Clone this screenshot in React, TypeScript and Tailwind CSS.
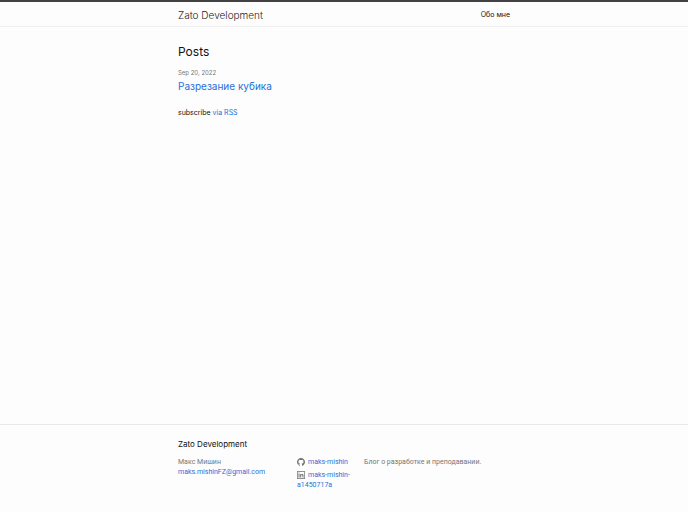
import React from "react";

const link = "text-[#2a6fd8] hover:underline";

function GithubIcon() {
  return (
    <svg viewBox="0 0 16 16" className="mr-[3px] inline-block size-2 align-text-top" fill="#707070" aria-hidden="true">
      <path d="M8 0C3.58 0 0 3.582 0 8c0 3.535 2.292 6.533 5.471 7.591.4.074.547-.174.547-.385 0-.191-.008-.821-.011-1.489-2.226.484-2.695-.944-2.695-.944-.364-.925-.888-1.171-.888-1.171-.726-.497.055-.486.055-.486.803.056 1.226.824 1.226.824.714 1.223 1.872.869 2.328.665.072-.517.279-.87.508-1.07-1.777-.202-3.645-.888-3.645-3.954 0-.873.313-1.587.824-2.147-.083-.202-.357-1.015.077-2.117 0 0 .672-.215 2.201.82A7.67 7.67 0 0 1 8 3.868c.68.003 1.365.092 2.004.269 1.527-1.035 2.198-.82 2.198-.82.435 1.102.162 1.916.079 2.117.513.56.823 1.274.823 2.147 0 3.073-1.872 3.749-3.653 3.947.287.248.543.735.543 1.481 0 1.07-.009 1.932-.009 2.195 0 .213.144.462.55.384C13.71 14.529 16 11.533 16 8c0-4.418-3.582-8-8-8" />
    </svg>
  );
}

function LinkedinIcon() {
  return (
    <svg viewBox="0 0 16 16" className="mr-[3px] inline-block size-2 align-text-top" fill="#707070" aria-hidden="true">
      <path fillRule="evenodd" d="M1.2 0h13.6C15.5 0 16 .5 16 1.1v13.8c0 .6-.5 1.1-1.2 1.1H1.2C.5 16 0 15.5 0 14.9V1.1C0 .5.5 0 1.2 0zM1.4 1.4v13.2h13.2V1.4zM3 6.2h2V13H3zM4 2.8a1.2 1.2 0 1 1 0 2.4 1.2 1.2 0 0 1 0-2.4zM6.4 6.2h2v1c.4-.7 1.1-1.2 2.1-1.2 2 0 2.5 1.3 2.5 3.2V13h-2V9.6c0-1-.2-1.8-1.2-1.8s-1.4.8-1.4 1.8V13h-2z" />
    </svg>
  );
}

export default function App() {
  return (
    <div className="flex min-h-screen flex-col bg-[#fdfdfd] font-['Inter','Noto_Sans',sans-serif] text-[7px] leading-[10px] text-[#111]">
      <header className="border-t-2 border-b border-t-[#424242] border-b-[#f0f0f0]">
        <div className="mx-auto flex h-6 max-w-[332px] items-center justify-between pt-[2px]">
          <a href="#" className="text-[10px] font-light text-[#222]">Zato Development</a>
          <nav>
            <a href="#about">Обо мне</a>
          </nav>
        </div>
      </header>
      <main className="mx-auto w-full max-w-[332px] flex-1 pt-4">
        <h1 className="text-[12px] leading-[18px]">Posts</h1>
        <ul className="mt-[7px]">
          <li>
            <time dateTime="2022-09-20" className="block text-[6px] text-[#767676]">Sep 20, 2022</time>
            <h2 className="text-[10px] leading-4">
              <a href="#post" className={link}>Разрезание кубика</a>
            </h2>
          </li>
        </ul>
        <p className="mt-[14px]">
          subscribe <a href="#rss" className={link}>via RSS</a>
        </p>
      </main>
      <footer className="border-t border-[#e8e8e8] pt-[14px] pb-[22px]">
        <div className="mx-auto max-w-[332px]">
          <h2 className="text-[8px]">Zato Development</h2>
          <div className="mt-2 grid grid-cols-[119fr_67fr_146fr] font-['Roboto',sans-serif] text-[7px] text-[#767676]">
            <ul>
              <li>Макс Мишин</li>
              <li><a href="mailto:maks.mishinFZ@gmail.com" className={link}>maks.mishinFZ@gmail.com</a></li>
            </ul>
            <ul className="flex flex-col gap-[3px] pr-2">
              <li><a href="#github" className={link}><GithubIcon />maks-mishin</a></li>
              <li><a href="#linkedin" className={link}><LinkedinIcon />maks-mishin-a1450717a</a></li>
            </ul>
            <p>Блог о разработке и преподавании.</p>
          </div>
        </div>
      </footer>
    </div>
  );
}
